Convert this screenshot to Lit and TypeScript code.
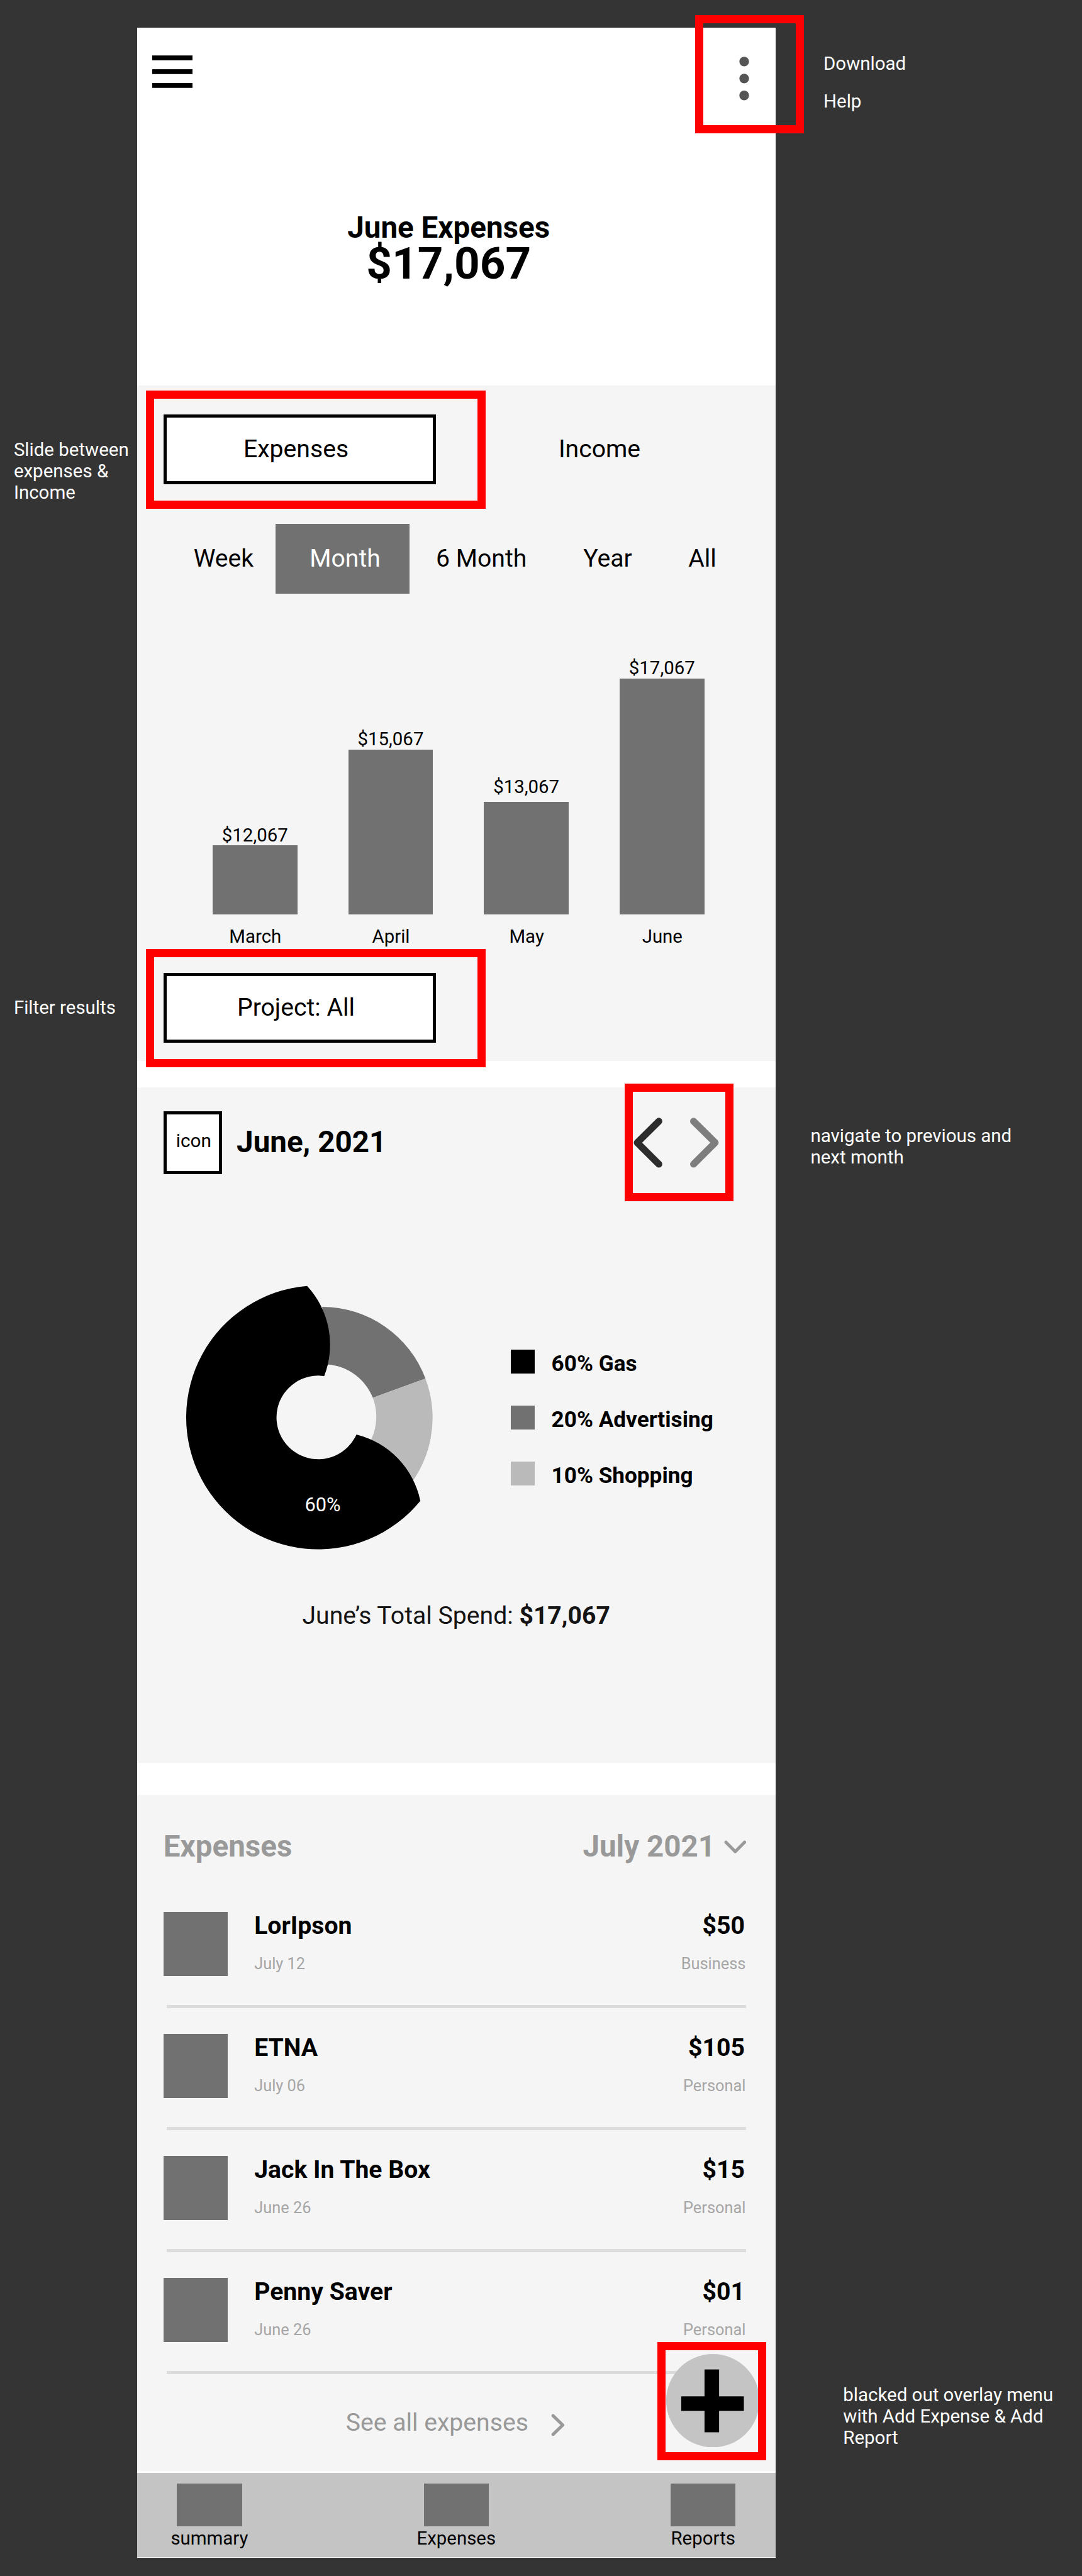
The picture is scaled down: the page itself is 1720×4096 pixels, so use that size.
import { LitElement, html, css, svg } from "lit";
import { customElement, property } from "lit/decorators.js";

interface Bar { month: string; value: string; height: number; lift: number; }
interface Expense { name: string; date: string; amount: string; kind: string; }

const BARS: Bar[] = [
  { month: "March", value: "$12,067", height: 110, lift: -1.2 },
  { month: "April", value: "$15,067", height: 262.1, lift: -0.7 },
  { month: "May", value: "$13,067", height: 178.9, lift: 6.9 },
  { month: "June", value: "$17,067", height: 374.9, lift: -0.3 },
];

const EXPENSES: Expense[] = [
  { name: "LorIpson", date: "July 12", amount: "$50", kind: "Business" },
  { name: "ETNA", date: "July 06", amount: "$105", kind: "Personal" },
  { name: "Jack In The Box", date: "June 26", amount: "$15", kind: "Personal" },
  { name: "Penny Saver", date: "June 26", amount: "$01", kind: "Personal" },
];

const LEGEND = [
  { label: "60% Gas", tone: "black" },
  { label: "20% Advertising", tone: "grey" },
  { label: "10% Shopping", tone: "light" },
];

@customElement("bar-chart")
class BarChart extends LitElement {
  static styles = css`
    :host { display: block; }
    .bars { display: flex; align-items: flex-end; gap: 81.1px; height: 510.3px; padding-left: 120.3px; }
    .col { display: flex; flex-direction: column; align-items: center; width: 134.8px; }
    .bar { width: 100%; background: #717171; }
    .labels { display: flex; gap: 81.1px; padding: 18.2px 0 0 120.8px; }
    .label { width: 134.8px; text-align: center; }
    .value, .label { font-size: 29.45px; line-height: 34.2px; white-space: nowrap; }
  `;
  render() {
    return html`
      <div class="bars">
        ${BARS.map((b) => html`
          <div class="col">
            <span class="value" style="margin-bottom:${b.lift}px">${b.value}</span>
            <div class="bar" style="height:${b.height}px"></div>
          </div>`)}
      </div>
      <div class="labels">${BARS.map((b) => html`<span class="label">${b.month}</span>`)}</div>`;
  }
}

@customElement("expense-row")
class ExpenseRow extends LitElement {
  @property({ attribute: false }) item!: Expense;
  static styles = css`
    :host { display: block; }
    .row { display: flex; height: 102.4px; padding: 0 47.2px 0 42.1px; }
    .thumb { width: 102.4px; height: 102.4px; background: #717171; margin-right: 42.1px; flex: none; }
    .text { display: flex; flex-direction: column; gap: 21.8px; margin-top: 0.4px; }
    .right { margin-left: auto; align-items: flex-end; }
    .main { font-size: 39.2px; line-height: 46px; font-weight: 700; white-space: nowrap; }
    .right .main { margin-right: 1.5px; }
    .sub { font-size: 25.4px; line-height: 30px; color: #a6a6a6; white-space: nowrap; }
    .rule { height: 4.8px; background: #dcdcdc; margin: 45.7px 46.6px 0 47px; }
  `;
  render() {
    const e = this.item;
    return html`
      <div class="row">
        <div class="thumb"></div>
        <div class="text"><span class="main">${e.name}</span><span class="sub">${e.date}</span></div>
        <div class="text right"><span class="main">${e.amount}</span><span class="sub">${e.kind}</span></div>
      </div>
      <div class="rule"></div>`;
  }
}

@customElement("app-root")
class AppRoot extends LitElement {
  static styles = css`
    :host { display: block; height: 4096px; overflow: hidden; background: #343434; }
    * { box-sizing: border-box; }
    .board {
      zoom: 0.999; display: grid; grid-template-columns: 218px 1015.8px 1fr; height: 4101px;
      font-family: Roboto, sans-serif; color: #000;
    }
    .notes { display: flex; flex-direction: column; color: #fff; font-size: 29.5px; line-height: 34.1px; white-space: nowrap; }
    .notes.left { padding: 699px 0 0 21.9px; gap: 785.6px; }
    .notes.right { padding-top: 84px; }
    .n-download, .n-help { margin-left: 76.5px; }
    .n-help { margin-top: 26.3px; }
    .n-nav { margin: 1612.5px 0 0 55.9px; }
    .n-fab { margin: 1935.9px 0 0 107.8px; }

    .phone { position: relative; margin-top: 44px; height: 4026.7px; background: #fff; }
    .mark { position: absolute; border: 13.1px solid #f00; pointer-events: none; }

    .header { height: 570px; }
    .topbar { display: flex; justify-content: space-between; align-items: flex-start; height: 296.9px; padding: 44px 41.4px 0 24.4px; }
    .burger { display: block; }
    .dots { display: block; margin-top: 2.3px; }
    .title { padding-right: 24px; text-align: center; font-weight: 700; font-size: 47.6px; line-height: 43.7px; }
    .total { padding-right: 24px; text-align: center; font-weight: 700; font-size: 71.1px; line-height: 70px; }
    .m-menu { left: 887.9px; top: -20px; width: 173px; height: 188px; }

    .panel { background: #f5f5f5; overflow: visible; }
    .trend { height: 1074.8px; padding-top: 46px; }
    .switch { display: flex; align-items: center; padding-left: 41.8px; height: 111px; font-size: 39.2px; line-height: 46px; }
    .spot { position: relative; width: 434.4px; height: 111px; }
    .boxed {
      display: flex; align-items: center; justify-content: center; height: 111px; padding: 0 12px 0 0;
      border: 5.1px solid #000; background: #fff; font-size: 39.2px; line-height: 46px;
    }
    .spot .mark { left: -27.4px; top: -38px; width: 540px; height: 188px; }
    .income { margin: 0 0 0 194.6px; }
    .tabs { display: grid; grid-template-columns: 130.8px 213px 276.3px 167.3px auto; align-items: center;
      height: 110.7px; margin-top: 63.3px; padding-left: 90px; font-size: 39.2px; line-height: 46px; }
    .tab { padding-top: 1.4px; white-space: nowrap; }
    .tab.on { display: flex; align-items: center; height: 110.7px; padding-left: 54px; background: #717171; color: #fff; }
    .tab.six { padding-left: 42px; }
    .filter { padding: 41.1px 0 0 41.8px; }

    .share { margin-top: 41.6px; height: 1075px; padding-top: 37.9px; }
    .share-head { display: flex; align-items: center; height: 100.5px; padding: 0 89.6px 0 42.1px; }
    .icon { display: flex; align-items: center; justify-content: center; width: 93.3px; height: 100.5px; padding: 0 0 4.6px 3px;
      border: 5.1px solid #000; background: #fff; font-size: 29.8px; line-height: 34px; }
    .month { margin-left: 23.1px; font-size: 47.6px; line-height: 56px; font-weight: 700; }
    .stepper { position: relative; margin-left: auto; width: 136px; height: 80px; }
    .stepper svg { display: block; }
    .stepper .mark { left: -14px; top: -54.3px; width: 173px; height: 188px; }
    .share-body { display: flex; align-items: flex-start; margin-top: 174.8px; padding-left: 77.5px; }
    .donut { display: block; flex: none; }
    .donut text { font-size: 30.8px; fill: #fff; text-anchor: middle; }
    .legend { display: flex; flex-direction: column; gap: 51.6px; margin: 104.7px 0 0 121.5px; }
    .key { display: flex; gap: 26.5px; height: 37.5px; }
    .swatch { width: 38px; height: 37.5px; }
    .black { background: #000; }
    .grey { background: #717171; }
    .light { background: #bababa; }
    .key-text { margin-top: 2.3px; font-size: 35.2px; line-height: 42px; font-weight: 700; white-space: nowrap; }
    .spend { margin-top: 82.2px; text-align: center; color: #141414; font-size: 39.2px; line-height: 46px; }

    .list { margin-top: 51.7px; height: 1075.5px; padding-top: 55px; }
    .list-head { display: flex; align-items: center; height: 56px; padding: 0 46px 0 42.1px; color: #999; font-size: 47.6px; line-height: 56px; font-weight: 700; }
    .period { display: flex; align-items: center; gap: 14px; margin-left: auto; }
    .rows { display: flex; flex-direction: column; gap: 41.35px; margin-top: 74.8px; }
    .more { display: flex; align-items: center; gap: 36.2px; margin-top: 55.2px; padding-left: 332.2px; color: #999; font-size: 39.2px; line-height: 46px; }
    .more svg { margin-top: 5.6px; }

    .tabbar { display: flex; gap: 262.8px; height: 134.8px; margin-top: 3.2px; padding: 17.3px 0 0 50.3px; background: #c4c4c4; }
    .tabbar-item { display: flex; flex-direction: column; align-items: center; gap: 1.9px; width: 130px; font-size: 29.45px; line-height: 34.2px; }
    .tabbar-icon { width: 103.3px; height: 68.3px; background: #717171; }

    .fab { position: absolute; left: 842.3px; top: 3702.4px; width: 148.6px; height: 148.6px; }
    .fab svg { display: block; }
    .m-fab { left: 827.8px; top: 3684.1px; width: 173px; height: 188px; }
  `;

  private donut() {
    return svg`
      <path fill="#717171" d="M6.5 -176 A176 176 0 0 1 170.7 -61.8 L86.9 -31.4 A84.7 84.7 0 0 0 6.5 -84.7 Z"/>
      <path fill="#bababa" d="M170.7 -61.8 A176 176 0 0 1 131 124.5 L66.4 60 A84.7 84.7 0 0 0 86.9 -31.4 Z"/>
      <path fill="#000" d="M-17.6 -209.3 A210 210 0 1 0 162.6 132.8 A138 138 0 0 0 60.9 27.2 A66.5 66.5 0 1 1 9.6 -65.8 A138 138 0 0 0 -17.6 -209.3 Z"/>
      <text x="7.3" y="149.7">60%</text>`;
  }

  render() {
    return html`
      <div class="board">
        <aside class="notes left">
          <div>Slide between<br>expenses &amp;<br>Income</div>
          <div>Filter results</div>
        </aside>

        <main class="phone">
          <header class="header">
            <div class="topbar">
              <svg class="burger" width="64.4" height="52" viewBox="0 0 64.4 52">
                <rect width="64.4" height="7.7" y="0.2"/><rect width="64.4" height="7.7" y="22.1"/><rect width="64.4" height="7.7" y="44.1"/>
              </svg>
              <svg class="dots" width="16" height="70" viewBox="0 0 16 70" fill="#555">
                <circle cx="8" cy="7.8" r="7.7"/><circle cx="8" cy="34.9" r="7.7"/><circle cx="8" cy="61.9" r="7.7"/>
              </svg>
            </div>
            <div class="title">June Expenses</div>
            <div class="total">$17,067</div>
          </header>

          <section class="panel trend">
            <div class="switch">
              <div class="spot"><div class="boxed">Expenses</div><div class="mark"></div></div>
              <span class="income">Income</span>
            </div>
            <div class="tabs">
              <span class="tab">Week</span>
              <span class="tab on">Month</span>
              <span class="tab six">6 Month</span>
              <span class="tab">Year</span>
              <span class="tab">All</span>
            </div>
            <bar-chart></bar-chart>
            <div class="filter">
              <div class="spot"><div class="boxed">Project: All</div><div class="mark"></div></div>
            </div>
          </section>

          <section class="panel share">
            <div class="share-head">
              <div class="icon">icon</div>
              <div class="month">June, 2021</div>
              <div class="stepper">
                <svg width="136" height="80" viewBox="0 0 136 80" fill="none" stroke-width="11" stroke-linecap="round" stroke-linejoin="round">
                  <path stroke="#2d2d2d" d="M40.4 5.8 L6 40 L40.4 74.2"/>
                  <path stroke="#7e7e7e" d="M95.6 5.8 L130 40 L95.6 74.2"/>
                </svg>
                <div class="mark"></div>
              </div>
            </div>
            <div class="share-body">
              <svg class="donut" width="396" height="424" viewBox="-211 -212 396 424">${this.donut()}</svg>
              <div class="legend">
                ${LEGEND.map((k) => html`<div class="key"><div class="swatch ${k.tone}"></div><span class="key-text">${k.label}</span></div>`)}
              </div>
            </div>
            <div class="spend">June’s Total Spend: <b>$17,067</b></div>
          </section>

          <section class="panel list">
            <div class="list-head">
              <span>Expenses</span>
              <div class="period">
                <span>July 2021</span>
                <svg width="35.6" height="22" viewBox="0 0 35.6 22" fill="none" stroke="#999" stroke-width="5" stroke-linecap="round" stroke-linejoin="round">
                  <path d="M3 3.2 L17.8 18.2 L32.6 3.2"/>
                </svg>
              </div>
            </div>
            <div class="rows">${EXPENSES.map((e) => html`<expense-row .item=${e}></expense-row>`)}</div>
            <div class="more">
              <span>See all expenses</span>
              <svg width="22" height="36" viewBox="0 0 22 36" fill="none" stroke="#999" stroke-width="5" stroke-linecap="round" stroke-linejoin="round">
                <path d="M3.2 3.1 L18.6 18 L3.2 32.9"/>
              </svg>
            </div>
          </section>

          <nav class="tabbar">
            ${["summary", "Expenses", "Reports"].map((t) => html`<div class="tabbar-item"><div class="tabbar-icon"></div><span>${t}</span></div>`)}
          </nav>

          <div class="fab">
            <svg width="148.6" height="148.6" viewBox="0 0 148.6 148.6">
              <circle cx="74.3" cy="74.3" r="74.3" fill="#c4c4c4"/>
              <rect x="61" y="24.6" width="23.2" height="100"/>
              <rect x="24" y="67.4" width="99.6" height="23.2"/>
            </svg>
          </div>
          <div class="mark m-fab"></div>
          <div class="mark m-menu"></div>
        </main>

        <aside class="notes right">
          <div class="n-download">Download</div>
          <div class="n-help">Help</div>
          <div class="n-nav">navigate to previous and<br>next month</div>
          <div class="n-fab">blacked out overlay menu<br>with Add Expense &amp; Add<br>Report</div>
        </aside>
      </div>`;
  }
}
